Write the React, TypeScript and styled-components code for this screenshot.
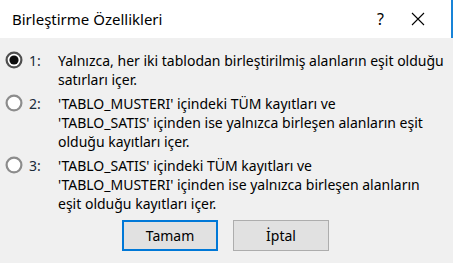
import React from "react";
import styled, { createGlobalStyle } from "styled-components";

const Global = createGlobalStyle`
  html, body { margin: 0; padding: 0; background: #f0f0f0; }
  body { font-family: "Noto Sans", "Open Sans", sans-serif; }
`;

const Window = styled.div`
  width: 453px;
  height: 263px;
  display: flex;
  flex-direction: column;
  background: #f0f0f0;
  overflow: hidden;
`;

const TitleBar = styled.div`
  height: 38px;
  background: #ffffff;
  display: flex;
  align-items: center;
  padding-left: 12px;
  padding-right: 15px;
  border-right: 2px solid #1883d7;
  box-sizing: border-box;
`;

const Title = styled.div`
  flex: 1;
  font-size: 15px;
  color: #000;
`;

const TitleButton = styled.div`
  width: 37px;
  height: 38px;
  display: flex;
  align-items: center;
  justify-content: center;
  font-size: 16px;
  color: #000;
`;

const Body = styled.div`
  flex: 1;
  display: flex;
  flex-direction: column;
  padding: 13px 8px 0 5px;
  gap: 5px;
`;

const Option = styled.label`
  display: grid;
  grid-template-columns: 24px 29px 1fr;
  align-items: start;
  font-size: 14px;
  line-height: 19px;
  color: #000;
`;

const RadioBox = styled.span`
  display: block;
  width: 18px;
  height: 18px;
  svg { display: block; }
`;

function Radio({ checked }: { checked?: boolean }) {
  return (
    <RadioBox>
      <svg width="18" height="18" viewBox="0 0 18 18">
        <circle
          cx="9"
          cy="9"
          r="7.4"
          fill="#fff"
          stroke={checked ? "#4f4f4f" : "#8c8c8c"}
          strokeWidth={2.2}
        />
        {checked && <circle cx="9" cy="9" r="4.6" fill="#0d0d0d" />}
      </svg>
    </RadioBox>
  );
}

const Num = styled.span`
  color: #1a2a3a;
`;

const Text = styled.span`
  white-space: pre-line;
`;

const Buttons = styled.div`
  display: flex;
  gap: 15px;
  padding-left: 117px;
  margin-top: 2px;
`;

const Button = styled.div<{ $default?: boolean }>`
  width: 96px;
  height: 31px;
  box-sizing: border-box;
  display: flex;
  align-items: center;
  justify-content: center;
  background: #e1e1e1;
  border: ${(p) => (p.$default ? "2px solid #0078d7" : "1px solid #adadad")};
  font-size: 14px;
  color: #000;
`;

const options = [
  {
    n: "1:",
    checked: true,
    text: "Yalnızca, her iki tablodan birleştirilmiş alanların eşit olduğu\nsatırları içer.",
  },
  {
    n: "2:",
    text: "'TABLO_MUSTERI' içindeki TÜM kayıtları ve\n'TABLO_SATIS' içinden ise yalnızca birleşen alanların eşit\nolduğu kayıtları içer.",
  },
  {
    n: "3:",
    text: "'TABLO_SATIS' içindeki TÜM kayıtları ve\n'TABLO_MUSTERI' içinden ise yalnızca birleşen alanların\neşit olduğu kayıtları içer.",
  },
];

export default function App() {
  return (
    <Window>
      <Global />
      <TitleBar>
        <Title>Birleştirme Özellikleri</Title>
        <TitleButton>?</TitleButton>
        <TitleButton>
          <svg width="14" height="14" viewBox="0 0 14 14">
            <path d="M1 1 L13 13 M13 1 L1 13" stroke="#000" strokeWidth="1.1" fill="none" />
          </svg>
        </TitleButton>
      </TitleBar>
      <Body>
        {options.map((o) => (
          <Option key={o.n}>
            <Radio checked={o.checked} />
            <Num>{o.n}</Num>
            <Text>{o.text}</Text>
          </Option>
        ))}
        <Buttons>
          <Button $default>Tamam</Button>
          <Button>İptal</Button>
        </Buttons>
      </Body>
    </Window>
  );
}
